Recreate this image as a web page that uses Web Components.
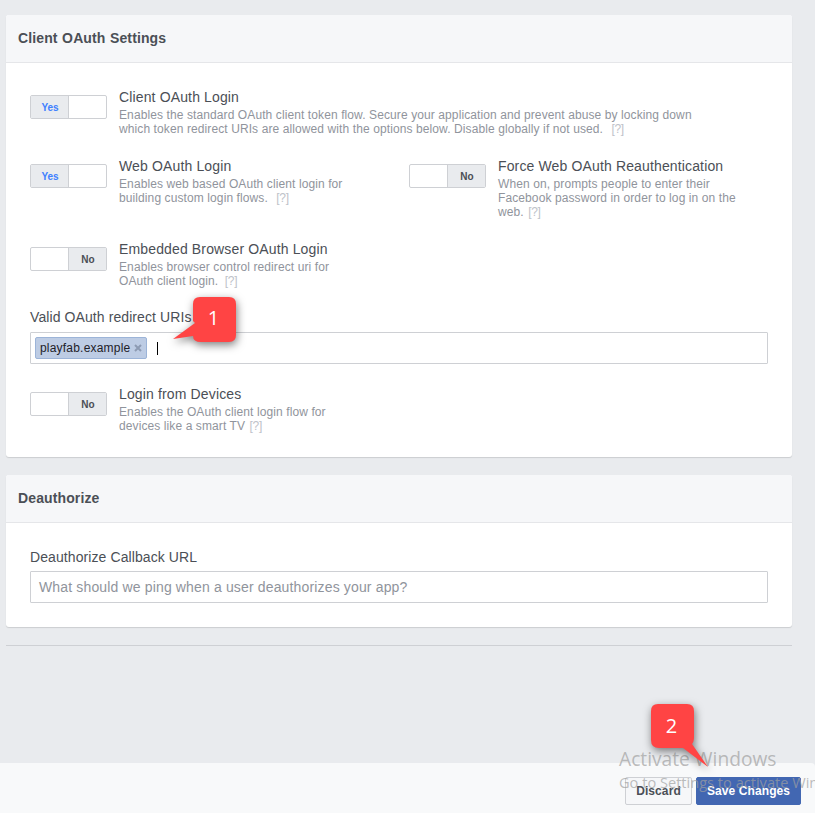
<!DOCTYPE html>
<html><head><meta charset="utf-8">
<style>
html,body{margin:0;padding:0;height:813px;overflow:hidden;background:#e9ebee;font-family:"Liberation Sans",Arial,sans-serif}
#page{height:813px;display:flex;flex-direction:column;position:relative;overflow:hidden}
#content{flex:1;padding:15px 23px 0 6px;display:flex;flex-direction:column;gap:18px}
</style></head><body>
<template id="t-card"><style>
:host{display:block;background:#fff;border-radius:3px;box-shadow:0 1px 1px rgba(0,0,0,.13)}
header{height:48px;box-sizing:border-box;background:#f6f7f9;border-bottom:1px solid #e5e6e9;border-radius:3px 3px 0 0;padding:0 12px;font:bold 14px/46px "Liberation Sans",Arial,sans-serif;color:#4b4f56;letter-spacing:.12px;word-spacing:.5px}
main{display:block;padding:var(--pad,32px 24px 24px)}
</style><header><slot name="title"></slot></header><main><slot></slot></main></template>

<template id="t-toggle"><style>
:host{display:block;flex:none;width:77px;height:24px;box-sizing:border-box;border:1px solid #ced0d4;border-radius:2px;background:#fff;overflow:hidden}
div{display:flex;height:100%}
b{width:38px;box-sizing:border-box;background:#e9ebee;padding-left:1px;font:bold 10px/23px "Liberation Sans",Arial,sans-serif;text-align:center}
i{flex:1}
:host([on]) b{color:#4080ff;border-right:1px solid #ced0d4}
:host(:not([on])) div{flex-direction:row-reverse}
:host(:not([on])) b{color:#4b4f56;border-left:1px solid #ced0d4}
</style><div><b></b><i></i></div></template>

<template id="t-option"><style>
:host{display:flex;gap:12px;align-items:flex-start;font-family:"Liberation Sans",Arial,sans-serif}
h4{margin:0 0 3px;font:normal 14px/16px "Liberation Sans",Arial,sans-serif;color:#4b4f56;letter-spacing:.14px}
p{margin:0;font:12px/14px "Liberation Sans",Arial,sans-serif;color:#90949c;letter-spacing:.1px}
.text{margin-top:-6px;width:var(--w,auto)}
</style><oa-toggle></oa-toggle><div class="text"><h4></h4><p><slot></slot></p></div></template>

<template id="t-help"><style>
:host{display:inline;color:#bec2c9;margin-left:var(--ml,4px);letter-spacing:-.3px}
</style>[?]</template>

<template id="t-field"><style>
:host{display:block;font-family:"Liberation Sans",Arial,sans-serif}
label{display:block;font:14px/18px "Liberation Sans",Arial,sans-serif;color:#4b4f56;letter-spacing:.09px;margin-bottom:var(--gap,6px)}
.box{height:32px;box-sizing:border-box;border:1px solid #ced0d4;border-radius:1px;background:#fff;display:flex;align-items:center;padding:0 8px;font:14px/18px "Liberation Sans",Arial,sans-serif;color:#90949c;letter-spacing:.15px}
:host([tags]) .box{padding:0 4px}
</style><label></label><div class="box"><slot></slot></div></template>

<template id="t-tag"><style>
:host{display:inline-flex;align-items:center;height:22px;box-sizing:border-box;border:1px solid #9cb4d8;border-radius:2px;background:#bdcce4;color:#1d2129;padding:0 4px 0 4px;font:12px/20px "Liberation Sans",Arial,sans-serif;letter-spacing:.2px;gap:4px}
svg{display:block}
</style><slot></slot><svg width="8" height="8" viewBox="0 0 8 8"><path d="M1 1l6 6M7 1l-6 6" stroke="#8d9bb3" stroke-width="2"/></svg></template>

<template id="t-callout"><style>
:host{position:absolute;display:block;width:var(--w);height:var(--h);left:var(--x);top:var(--y);z-index:5}
svg{position:absolute;left:0;top:0;overflow:visible;filter:drop-shadow(1px 3px 4px rgba(0,0,0,.5))}
span{position:absolute;left:var(--tx);top:var(--ty);width:43px;text-align:center;color:#fff;font:20px/22px "Open Sans","Liberation Sans",sans-serif}
</style><svg width="100%" height="100%"><path fill="#ff4444"></path></svg><span><slot></slot></span></template>

<template id="t-bar"><style>
:host{display:flex;justify-content:flex-end;gap:4px;height:50px;box-sizing:border-box;background:#f8f9fa;padding:14px 14px 8px 0;border-radius:0 4px 0 0}
</style><slot></slot></template>

<template id="t-btn"><style>
:host{display:block;box-sizing:border-box;height:28px;border:1px solid #ced0d4;border-radius:2px;background:#f6f7f9;color:#4b4f56;text-align:center;font:bold 12px/26px "Liberation Sans",Arial,sans-serif;letter-spacing:.1px}
:host([primary]){background:#4267b2;border-color:#4267b2;color:#fff}
</style><slot></slot></template>

<template id="t-wm"><style>
:host{position:absolute;left:619px;top:748px;z-index:4;color:rgba(160,160,160,.7);font-family:"Open Sans","Liberation Sans",sans-serif;white-space:nowrap;pointer-events:none}
div{font-size:19.2px;line-height:22px}
small{display:block;font-size:14.6px;line-height:22px;margin-top:1px}
</style><div>Activate Windows</div><small>Go to Settings to activate Windows.</small></template>

<div id="page">
<div id="content">
<oa-card>
<span slot="title">Client OAuth Settings</span>
<oa-grid>
  <oa-option class="wide" title-text="Client OAuth Login" on style="--w:590px">Enables the standard OAuth client token flow. Secure your application and prevent abuse by locking down which token redirect URIs are allowed with the options below. Disable globally if not used. <oa-help style="--ml:5px"></oa-help></oa-option>
  <oa-option title-text="Web OAuth Login" on style="--w:230px">Enables web based OAuth client login for building custom login flows. <oa-help style="--ml:5px"></oa-help></oa-option>
  <oa-option title-text="Force Web OAuth Reauthentication" style="--w:250px">When on, prompts people to enter their Facebook password in order to log in on the web. <oa-help style="--ml:1px"></oa-help></oa-option>
  <oa-option class="wide" title-text="Embedded Browser OAuth Login" style="--w:230px">Enables browser control redirect uri for OAuth client login. <oa-help style="--ml:3px"></oa-help></oa-option>
</oa-grid>
<oa-field label="Valid OAuth redirect URIs" tags style="margin-top:20px"><oa-tag>playfab.example</oa-tag><oa-caret></oa-caret></oa-field>
<oa-option title-text="Login from Devices" style="--w:230px;margin-top:28px">Enables the OAuth client login flow for devices like a smart TV <oa-help style="--ml:1px"></oa-help></oa-option>
</oa-card>
<oa-card style="--pad:25px 24px 24px">
<span slot="title">Deauthorize</span>
<oa-field label="Deauthorize Callback URL" style="--gap:5px">What should we ping when a user deauthorizes your app?</oa-field>
</oa-card>
<oa-rule></oa-rule>
</div>
<oa-bar><oa-btn style="width:67px">Discard</oa-btn><oa-btn primary style="width:105px">Save Changes</oa-btn></oa-bar>
<oa-wm></oa-wm>
<oa-callout d="M7 0H36Q43 0 43 7V38Q43 45 36 45H8Q0 45 0 39L-20 42L2 26L0 24V7Q0 0 7 0Z" style="--x:193px;--y:297px;--w:43px;--h:45px;--tx:-1px;--ty:10px">1</oa-callout>
<oa-callout d="M7 0H36Q43 0 43 7V33Q43 38 41 40L57 63L32 44H8Q0 44 0 36V7Q0 0 7 0Z" style="--x:651px;--y:704px;--w:43px;--h:44px;--tx:-1px;--ty:11px">2</oa-callout>
</div>
<script>
function def(name,tid,extra,observed){
  customElements.define(name,class extends HTMLElement{
    static get observedAttributes(){return observed||[];}
    constructor(){super();this.attachShadow({mode:'open'}).appendChild(document.getElementById(tid).content.cloneNode(true));}
    connectedCallback(){extra&&extra.call(this,this.shadowRoot);}
    attributeChangedCallback(){extra&&extra.call(this,this.shadowRoot);}
  });
}
def('oa-card','t-card');
def('oa-toggle','t-toggle',function(s){s.querySelector('b').textContent=this.hasAttribute('on')?'Yes':'No';},['on']);
def('oa-option','t-option',function(s){
  s.querySelector('h4').textContent=this.getAttribute('title-text');
  if(this.hasAttribute('on'))s.querySelector('oa-toggle').setAttribute('on','');
});
def('oa-help','t-help');
def('oa-field','t-field',function(s){s.querySelector('label').textContent=this.getAttribute('label');});
def('oa-tag','t-tag');
def('oa-bar','t-bar');
def('oa-btn','t-btn');
def('oa-wm','t-wm');
def('oa-callout','t-callout',function(s){s.querySelector('path').setAttribute('d',this.getAttribute('d'));});
customElements.define('oa-grid',class extends HTMLElement{constructor(){super();this.attachShadow({mode:'open'}).innerHTML='<style>:host{display:grid;grid-template-columns:379px 1fr;row-gap:28px}::slotted(.wide){grid-column:1/-1}</style><slot></slot>';}});
customElements.define('oa-caret',class extends HTMLElement{constructor(){super();this.attachShadow({mode:'open'}).innerHTML='<style>:host{display:block;width:1px;height:13px;background:#000;margin-left:10px}</style>';}});
customElements.define('oa-rule',class extends HTMLElement{constructor(){super();this.attachShadow({mode:'open'}).innerHTML='<style>:host{display:block;height:1px;background:#ced0d4;}</style>';}});
</script>
</body></html>
